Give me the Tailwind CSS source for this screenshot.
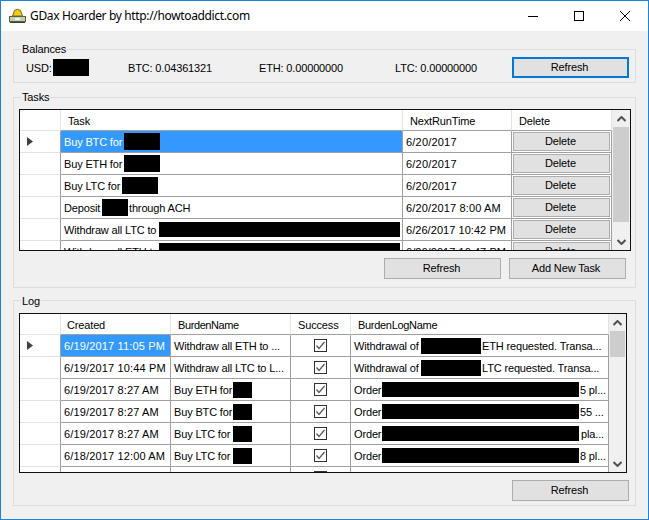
<!DOCTYPE html>
<html lang="en">
<head>
    <meta charset="UTF-8">
    <title>GDax Hoarder by http://howtoaddict.com</title>
    <script src="https://cdn.jsdelivr.net/npm/@tailwindcss/browser@4"></script>
</head>
<body class="bg-[#f0f0f0]">
<div class="w-[649px] h-[520px] overflow-hidden border border-[#1a85d8] bg-[#f0f0f0] text-[11px] tracking-[-0.15px] text-black whitespace-nowrap font-['Liberation_Sans',sans-serif]">

    <!-- title bar -->
    <header class="h-[30px] bg-white flex items-center pl-[8px]">
        <svg width="17" height="15" viewBox="0 0 17 15" class="mt-[-1px]">
            <path d="M3.5 8 L5.5 2.5 Q8.5 0 11.5 2.5 L13.5 8 Z" fill="#f0cc1e" stroke="#7d6a10" stroke-width="1"/>
            <rect x="0.5" y="8.5" width="16" height="5" fill="#c3d0aa" stroke="#56604a"/>
            <rect x="6" y="10" width="5" height="2" fill="#f2f5e8"/>
            <path d="M1 14.5H16" stroke="#39402f"/>
        </svg>
        <span class="ml-[4px] text-[12px] tracking-[-0.35px] font-['Noto_Sans',sans-serif]">GDax Hoarder by http://howtoaddict.com</span>
        <div class="ml-auto flex">
            <div class="w-[46px] h-[30px] flex items-center justify-center">
                <svg width="10" height="10" viewBox="0 0 10 10"><path d="M0 5.5H10" stroke="#000" fill="none"/></svg>
            </div>
            <div class="w-[46px] h-[30px] flex items-center justify-center">
                <svg width="10" height="10" viewBox="0 0 10 10"><rect x="0.5" y="0.5" width="9" height="9" stroke="#000" fill="none"/></svg>
            </div>
            <div class="w-[46px] h-[30px] flex items-center justify-center">
                <svg width="10" height="10" viewBox="0 0 10 10"><path d="M0 0L10 10M10 0L0 10" stroke="#000" fill="none"/></svg>
            </div>
        </div>
    </header>

    <main class="pl-[12px] pt-[18px]">

        <!-- Balances -->
        <section class="w-[623px] h-[34px] border border-[#dcdcdc]">
            <div class="w-fit h-[13px] leading-[13px] -mt-[7px] ml-[7px] px-[1px] bg-[#f0f0f0]">Balances</div>
            <div class="mt-[1px] flex items-center h-[21px] pl-[12px]">
                <span class="w-[27px] pt-[2px]">USD:</span>
                <i class="block w-[36px] h-[17px] bg-black"></i>
                <span class="w-[39px]"></span>
                <span class="w-[131px] pt-[2px]">BTC: 0.04361321</span>
                <span class="w-[136px] pt-[2px]">ETH: 0.00000000</span>
                <span class="w-[117px] pt-[2px]">LTC: 0.00000000</span>
                <button class="w-[117px] h-[21px] pr-[2px] border-2 border-[#0078d7] bg-[#e1e1e1]">Refresh</button>
            </div>
        </section>

        <!-- Tasks -->
        <section class="w-[623px] h-[191px] mt-[14px] border border-[#dcdcdc]">
            <div class="w-fit h-[13px] leading-[13px] -mt-[7px] ml-[7px] px-[1px] bg-[#f0f0f0]">Tasks</div>
            <div class="mt-[5px] ml-[5px] w-[612px] h-[142px] border border-[#101010] bg-white flex overflow-hidden">
                <div class="w-[592px]">
                    <div class="flex h-[21px]">
                        <div class="w-[41px] border-r border-b border-[#e3e3e3]"></div>
                        <div class="w-[342px] border-r border-[#e3e3e3] border-b-[#a0a0a0] border-b flex items-center pl-[7px] pt-[2px]">Task</div>
                        <div class="w-[109px] border-r border-[#e3e3e3] border-b-[#a0a0a0] border-b flex items-center pl-[7px] pt-[2px]">NextRunTime</div>
                        <div class="w-[100px] border-r border-[#e3e3e3] border-b-[#a0a0a0] border-b flex items-center pl-[7px] pt-[2px]">Delete</div>
                    </div>
                    <div class="flex h-[22px]">
                        <div class="w-[41px] border-r border-r-[#a0a0a0] border-b border-b-[#e3e3e3] flex items-center pl-[7px]">
                            <svg width="6" height="9" viewBox="0 0 6 9"><path d="M0 0L6 4.5L0 9Z" fill="#404040"/></svg>
                        </div>
                        <div class="w-[342px] border-r border-b border-[#a0a0a0] flex items-center pl-[3px] bg-[#3399ff] text-white">
                            <span class="w-[60px] pt-[2px]">Buy BTC for</span><i class="block w-[36px] h-[17px] bg-black"></i>
                        </div>
                        <div class="w-[109px] border-r border-b border-[#a0a0a0] flex items-center pl-[3px] pt-[2px] tracking-[0.2px]">6/20/2017</div>
                        <div class="w-[100px] border-r border-b border-[#a0a0a0] p-[1px]"><button class="w-full h-full pr-[2px] border border-[#adadad] bg-[#e1e1e1]">Delete</button></div>
                    </div>
                    <div class="flex h-[22px]">
                        <div class="w-[41px] border-r border-r-[#a0a0a0] border-b border-b-[#e3e3e3]"></div>
                        <div class="w-[342px] border-r border-b border-[#a0a0a0] flex items-center pl-[3px]">
                            <span class="w-[60px] pt-[2px]">Buy ETH for</span><i class="block w-[36px] h-[17px] bg-black"></i>
                        </div>
                        <div class="w-[109px] border-r border-b border-[#a0a0a0] flex items-center pl-[3px] pt-[2px] tracking-[0.2px]">6/20/2017</div>
                        <div class="w-[100px] border-r border-b border-[#a0a0a0] p-[1px]"><button class="w-full h-full pr-[2px] border border-[#adadad] bg-[#e1e1e1]">Delete</button></div>
                    </div>
                    <div class="flex h-[22px]">
                        <div class="w-[41px] border-r border-r-[#a0a0a0] border-b border-b-[#e3e3e3]"></div>
                        <div class="w-[342px] border-r border-b border-[#a0a0a0] flex items-center pl-[3px]">
                            <span class="w-[58px] pt-[2px]">Buy LTC for</span><i class="block w-[36px] h-[17px] bg-black"></i>
                        </div>
                        <div class="w-[109px] border-r border-b border-[#a0a0a0] flex items-center pl-[3px] pt-[2px] tracking-[0.2px]">6/20/2017</div>
                        <div class="w-[100px] border-r border-b border-[#a0a0a0] p-[1px]"><button class="w-full h-full pr-[2px] border border-[#adadad] bg-[#e1e1e1]">Delete</button></div>
                    </div>
                    <div class="flex h-[22px]">
                        <div class="w-[41px] border-r border-r-[#a0a0a0] border-b border-b-[#e3e3e3]"></div>
                        <div class="w-[342px] border-r border-b border-[#a0a0a0] flex items-center pl-[3px]">
                            <span class="w-[38px] pt-[2px]">Deposit</span><i class="block w-[26px] h-[17px] bg-black mr-[1px]"></i><span class="pt-[2px]">through ACH</span>
                        </div>
                        <div class="w-[109px] border-r border-b border-[#a0a0a0] flex items-center pl-[3px] pt-[2px] tracking-[0.15px]">6/20/2017 8:00 AM</div>
                        <div class="w-[100px] border-r border-b border-[#a0a0a0] p-[1px]"><button class="w-full h-full pr-[2px] border border-[#adadad] bg-[#e1e1e1]">Delete</button></div>
                    </div>
                    <div class="flex h-[22px]">
                        <div class="w-[41px] border-r border-r-[#a0a0a0] border-b border-b-[#e3e3e3]"></div>
                        <div class="w-[342px] border-r border-b border-[#a0a0a0] flex items-center pl-[3px]">
                            <span class="w-[95px] pt-[2px]">Withdraw all LTC to</span><i class="block w-[241px] h-[15px] bg-black"></i>
                        </div>
                        <div class="w-[109px] border-r border-b border-[#a0a0a0] flex items-center pl-[3px] pt-[2px] tracking-[0.05px]">6/26/2017 10:42 PM</div>
                        <div class="w-[100px] border-r border-b border-[#a0a0a0] p-[1px]"><button class="w-full h-full pr-[2px] border border-[#adadad] bg-[#e1e1e1]">Delete</button></div>
                    </div>
                    <div class="flex h-[22px]">
                        <div class="w-[41px] border-r border-r-[#a0a0a0] border-b border-b-[#e3e3e3]"></div>
                        <div class="w-[342px] border-r border-b border-[#a0a0a0] flex items-center pl-[3px]">
                            <span class="w-[95px] pt-[2px]">Withdraw all ETH to</span><i class="block w-[241px] h-[17px] bg-black"></i>
                        </div>
                        <div class="w-[109px] border-r border-b border-[#a0a0a0] flex items-center pl-[3px] pt-[2px] tracking-[0.05px]">6/26/2017 10:47 PM</div>
                        <div class="w-[100px] border-r border-b border-[#a0a0a0] p-[1px]"><button class="w-full h-full pr-[2px] border border-[#adadad] bg-[#e1e1e1]">Delete</button></div>
                    </div>
                </div>
                <!-- scrollbar -->
                <div class="w-[18px] h-[140px] bg-[#f0f0f0] flex flex-col">
                    <div class="h-[17px] flex items-center justify-center">
                        <svg width="9" height="6" viewBox="0 0 9 6"><path d="M0.5 5L4.5 1L8.5 5" stroke="#505050" stroke-width="2" fill="none"/></svg>
                    </div>
                    <div class="h-[95px] mx-[1px] bg-[#cdcdcd]"></div>
                    <div class="h-[11px]"></div>
                    <div class="h-[17px] flex items-center justify-center">
                        <svg width="9" height="6" viewBox="0 0 9 6"><path d="M0.5 1L4.5 5L8.5 1" stroke="#505050" stroke-width="2" fill="none"/></svg>
                    </div>
                </div>
            </div>
            <div class="mt-[7px] pr-[9px] flex justify-end gap-[8px]">
                <button class="w-[117px] h-[21px] pr-[2px] border border-[#adadad] bg-[#e1e1e1]">Refresh</button>
                <button class="w-[117px] h-[21px] pr-[3px] border border-[#adadad] bg-[#e1e1e1]">Add New Task</button>
            </div>
        </section>

        <!-- Log -->
        <section class="w-[623px] h-[206px] mt-[12px] border border-[#dcdcdc]">
            <div class="w-fit h-[13px] leading-[13px] -mt-[7px] ml-[7px] px-[1px] pt-[1px] bg-[#f0f0f0]">Log</div>
            <div class="mt-[6px] ml-[5px] w-[608px] h-[160px] border border-[#101010] bg-white flex overflow-hidden">
                <div class="w-[589px]">
                    <div class="flex h-[21px]">
                        <div class="w-[41px] border-r border-b border-[#e3e3e3]"></div>
                        <div class="w-[110px] border-r border-[#e3e3e3] border-b-[#a0a0a0] border-b flex items-center pl-[6px] pt-[2px]">Created</div>
                        <div class="w-[120px] border-r border-[#e3e3e3] border-b-[#a0a0a0] border-b flex items-center pl-[7px] pt-[2px] tracking-[-0.4px]">BurdenName</div>
                        <div class="w-[60px] border-r border-[#e3e3e3] border-b-[#a0a0a0] border-b flex items-center pl-[7px] pt-[2px]">Success</div>
                        <div class="w-[258px] border-r border-[#e3e3e3] border-b-[#a0a0a0] border-b flex items-center pl-[7px] pt-[2px] tracking-[-0.3px]">BurdenLogName</div>
                    </div>
                    <div class="flex h-[22px]">
                        <div class="w-[41px] border-r border-r-[#a0a0a0] border-b border-b-[#e3e3e3] flex items-center pl-[7px]">
                            <svg width="6" height="9" viewBox="0 0 6 9"><path d="M0 0L6 4.5L0 9Z" fill="#404040"/></svg>
                        </div>
                        <div class="w-[110px] border-r border-b border-[#a0a0a0] flex items-center pl-[3px] pt-[2px] tracking-[0.15px] bg-[#3399ff] text-white">6/19/2017 11:05 PM</div>
                        <div class="w-[120px] border-r border-b border-[#a0a0a0] flex items-center pl-[3px] pt-[2px]">Withdraw all ETH to ...</div>
                        <div class="w-[60px] border-r border-b border-[#a0a0a0] flex items-center justify-center">
                            <svg width="13" height="13" viewBox="0 0 13 13"><rect x="0.5" y="0.5" width="12" height="12" fill="#fff" stroke="#333"/><path d="M2.5 6.5L5 9.5L10.5 3" stroke="#555" stroke-width="1.2" fill="none"/></svg>
                        </div>
                        <div class="w-[258px] border-r border-b border-[#a0a0a0] flex items-center pl-[3px]">
                            <span class="w-[67px] pt-[2px]">Withdrawal of</span><i class="block w-[60px] h-[16px] bg-black mr-[1px]"></i><span class="pt-[2px]">ETH requested. Transa...</span>
                        </div>
                    </div>
                    <div class="flex h-[22px]">
                        <div class="w-[41px] border-r border-r-[#a0a0a0] border-b border-b-[#e3e3e3]"></div>
                        <div class="w-[110px] border-r border-b border-[#a0a0a0] flex items-center pl-[3px] pt-[2px] tracking-[0.15px]">6/19/2017 10:44 PM</div>
                        <div class="w-[120px] border-r border-b border-[#a0a0a0] flex items-center pl-[3px] pt-[2px]">Withdraw all LTC to L...</div>
                        <div class="w-[60px] border-r border-b border-[#a0a0a0] flex items-center justify-center">
                            <svg width="13" height="13" viewBox="0 0 13 13"><rect x="0.5" y="0.5" width="12" height="12" fill="#fff" stroke="#333"/><path d="M2.5 6.5L5 9.5L10.5 3" stroke="#555" stroke-width="1.2" fill="none"/></svg>
                        </div>
                        <div class="w-[258px] border-r border-b border-[#a0a0a0] flex items-center pl-[3px]">
                            <span class="w-[67px] pt-[2px]">Withdrawal of</span><i class="block w-[60px] h-[16px] bg-black mr-[1px]"></i><span class="pt-[2px]">LTC requested. Transa...</span>
                        </div>
                    </div>
                    <div class="flex h-[22px]">
                        <div class="w-[41px] border-r border-r-[#a0a0a0] border-b border-b-[#e3e3e3]"></div>
                        <div class="w-[110px] border-r border-b border-[#a0a0a0] flex items-center pl-[3px] pt-[2px] tracking-[0.15px]">6/19/2017 8:27 AM</div>
                        <div class="w-[120px] border-r border-b border-[#a0a0a0] flex items-center pl-[3px]">
                            <span class="w-[59px] pt-[2px]">Buy ETH for</span><i class="block w-[19px] h-[16px] bg-black"></i>
                        </div>
                        <div class="w-[60px] border-r border-b border-[#a0a0a0] flex items-center justify-center">
                            <svg width="13" height="13" viewBox="0 0 13 13"><rect x="0.5" y="0.5" width="12" height="12" fill="#fff" stroke="#333"/><path d="M2.5 6.5L5 9.5L10.5 3" stroke="#555" stroke-width="1.2" fill="none"/></svg>
                        </div>
                        <div class="w-[258px] border-r border-b border-[#a0a0a0] flex items-center pl-[3px]">
                            <span class="w-[28px] pt-[2px]">Order</span><i class="block w-[197px] h-[15px] bg-black mr-[1px]"></i><span class="pt-[2px]">5 pl...</span>
                        </div>
                    </div>
                    <div class="flex h-[22px]">
                        <div class="w-[41px] border-r border-r-[#a0a0a0] border-b border-b-[#e3e3e3]"></div>
                        <div class="w-[110px] border-r border-b border-[#a0a0a0] flex items-center pl-[3px] pt-[2px] tracking-[0.15px]">6/19/2017 8:27 AM</div>
                        <div class="w-[120px] border-r border-b border-[#a0a0a0] flex items-center pl-[3px]">
                            <span class="w-[59px] pt-[2px]">Buy BTC for</span><i class="block w-[19px] h-[16px] bg-black"></i>
                        </div>
                        <div class="w-[60px] border-r border-b border-[#a0a0a0] flex items-center justify-center">
                            <svg width="13" height="13" viewBox="0 0 13 13"><rect x="0.5" y="0.5" width="12" height="12" fill="#fff" stroke="#333"/><path d="M2.5 6.5L5 9.5L10.5 3" stroke="#555" stroke-width="1.2" fill="none"/></svg>
                        </div>
                        <div class="w-[258px] border-r border-b border-[#a0a0a0] flex items-center pl-[3px]">
                            <span class="w-[28px] pt-[2px]">Order</span><i class="block w-[197px] h-[15px] bg-black mr-[1px]"></i><span class="pt-[2px]">55 ...</span>
                        </div>
                    </div>
                    <div class="flex h-[22px]">
                        <div class="w-[41px] border-r border-r-[#a0a0a0] border-b border-b-[#e3e3e3]"></div>
                        <div class="w-[110px] border-r border-b border-[#a0a0a0] flex items-center pl-[3px] pt-[2px] tracking-[0.15px]">6/19/2017 8:27 AM</div>
                        <div class="w-[120px] border-r border-b border-[#a0a0a0] flex items-center pl-[3px]">
                            <span class="w-[59px] pt-[2px]">Buy LTC for</span><i class="block w-[19px] h-[16px] bg-black"></i>
                        </div>
                        <div class="w-[60px] border-r border-b border-[#a0a0a0] flex items-center justify-center">
                            <svg width="13" height="13" viewBox="0 0 13 13"><rect x="0.5" y="0.5" width="12" height="12" fill="#fff" stroke="#333"/><path d="M2.5 6.5L5 9.5L10.5 3" stroke="#555" stroke-width="1.2" fill="none"/></svg>
                        </div>
                        <div class="w-[258px] border-r border-b border-[#a0a0a0] flex items-center pl-[3px]">
                            <span class="w-[28px] pt-[2px]">Order</span><i class="block w-[197px] h-[15px] bg-black mr-[2px]"></i><span class="pt-[2px]">pla...</span>
                        </div>
                    </div>
                    <div class="flex h-[22px]">
                        <div class="w-[41px] border-r border-r-[#a0a0a0] border-b border-b-[#e3e3e3]"></div>
                        <div class="w-[110px] border-r border-b border-[#a0a0a0] flex items-center pl-[3px] pt-[2px] tracking-[0.15px]">6/18/2017 12:00 AM</div>
                        <div class="w-[120px] border-r border-b border-[#a0a0a0] flex items-center pl-[3px]">
                            <span class="w-[59px] pt-[2px]">Buy LTC for</span><i class="block w-[19px] h-[16px] bg-black"></i>
                        </div>
                        <div class="w-[60px] border-r border-b border-[#a0a0a0] flex items-center justify-center">
                            <svg width="13" height="13" viewBox="0 0 13 13"><rect x="0.5" y="0.5" width="12" height="12" fill="#fff" stroke="#333"/><path d="M2.5 6.5L5 9.5L10.5 3" stroke="#555" stroke-width="1.2" fill="none"/></svg>
                        </div>
                        <div class="w-[258px] border-r border-b border-[#a0a0a0] flex items-center pl-[3px]">
                            <span class="w-[28px] pt-[2px]">Order</span><i class="block w-[197px] h-[15px] bg-black mr-[1px]"></i><span class="pt-[2px]">8 pl...</span>
                        </div>
                    </div>
                    <div class="flex h-[22px]">
                        <div class="w-[41px] border-r border-r-[#a0a0a0] border-b border-b-[#e3e3e3]"></div>
                        <div class="w-[110px] border-r border-b border-[#a0a0a0]"></div>
                        <div class="w-[120px] border-r border-b border-[#a0a0a0]"></div>
                        <div class="w-[60px] border-r border-b border-[#a0a0a0] flex items-center justify-center">
                            <svg width="13" height="13" viewBox="0 0 13 13"><rect x="0.5" y="0.5" width="12" height="12" fill="#fff" stroke="#333"/></svg>
                        </div>
                        <div class="w-[258px] border-r border-b border-[#a0a0a0]"></div>
                    </div>
                </div>
                <!-- scrollbar -->
                <div class="w-[17px] h-[158px] bg-[#f0f0f0] flex flex-col">
                    <div class="h-[17px] flex items-center justify-center">
                        <svg width="9" height="6" viewBox="0 0 9 6"><path d="M0.5 5L4.5 1L8.5 5" stroke="#505050" stroke-width="2" fill="none"/></svg>
                    </div>
                    <div class="h-[26px] ml-[1px] mr-[1px] bg-[#cdcdcd]"></div>
                    <div class="h-[98px]"></div>
                    <div class="h-[17px] flex items-center justify-center">
                        <svg width="9" height="6" viewBox="0 0 9 6"><path d="M0.5 1L4.5 5L8.5 1" stroke="#505050" stroke-width="2" fill="none"/></svg>
                    </div>
                </div>
            </div>
            <div class="mt-[7px] pr-[6px] flex justify-end">
                <button class="w-[117px] h-[21px] pr-[2px] border border-[#adadad] bg-[#e1e1e1]">Refresh</button>
            </div>
        </section>
    </main>
</div>
</body>
</html>
